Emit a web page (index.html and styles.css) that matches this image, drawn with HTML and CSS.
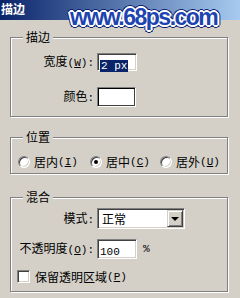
FILE: index.html
```html
<!DOCTYPE html>
<html lang="zh-CN">
<head>
    <meta charset="UTF-8">
    <meta name="viewport" content="width=device-width, initial-scale=1.0">
    <title>描边</title>
    <link rel="stylesheet" href="styles.css">
</head>
<body>
<div class="dialog">
    <div class="titlebar">描边</div>
    <div class="watermark">www.68ps.com</div>

    <div class="content">
        <div class="group g-stroke">
            <div class="legend">描边</div>
            <div class="form-grid">
                <label>宽度<span class="en">(<u>W</u>):</span></label>
                <span class="field"><span class="sel">2 px</span></span>
                <label>颜色<span class="en">:</span></label>
                <span class="swatch"></span>
            </div>
        </div>

        <div class="group g-pos">
            <div class="legend">位置</div>
            <div class="radios">
                <div class="opt"><span class="radio"></span>居内<span class="en">(<u>I</u>)</span></div>
                <div class="opt"><span class="radio on"></span>居中<span class="en">(<u>C</u>)</span></div>
                <div class="opt"><span class="radio"></span>居外<span class="en">(<u>U</u>)</span></div>
            </div>
        </div>

        <div class="group g-blend">
            <div class="legend">混合</div>
            <div class="form-grid">
                <label>模式<span class="en">:</span></label>
                <div class="select">
                    <span class="select-text">正常</span>
                    <span class="dd-btn"><span class="arrow"></span></span>
                </div>
                <label>不透明度<span class="en">(<u>O</u>):</span></label>
                <div class="with-unit">
                    <span class="field"><span class="val">100</span></span>
                    <span class="en unit">%</span>
                </div>
            </div>
            <div class="check-row">
                <span class="checkbox"></span>保留透明区域<span class="en">(<u>P</u>)</span>
            </div>
        </div>
    </div>
</div>
</body>
</html>
```

FILE: styles.css
```css
* { box-sizing: border-box; }
body { margin: 0; width: 240px; height: 298px; overflow: hidden; background: #d4d0c8; font-family: "Noto Sans CJK SC", sans-serif; font-size: 12px; line-height: 14px; color: #000; }
.en { font-family: "Liberation Mono", monospace; font-size: 11px; }
u { text-decoration: underline; text-underline-offset: 1px; }

.dialog { position: relative; height: 298px; }
.titlebar { height: 20px; line-height: 17px; padding-left: 1px; color: #fff; font-weight: bold; background: linear-gradient(to right, #0a246a, #a6caf0); }

/* site watermark stamped over the dialog */
.watermark {
    position: absolute; left: 70px; top: 6px;
    font-family: "Liberation Sans", Arial, sans-serif; font-weight: bold; font-size: 23px; line-height: 23px; letter-spacing: -1.5px;
    color: #1d44b0;
    text-shadow:
        1px 0 #fff, -1px 0 #fff, 0 1px #fff, 0 -1px #fff,
        1px 1px #fff, -1px -1px #fff, 1px -1px #fff, -1px 1px #fff,
        2px 0 #fff, -2px 0 #fff, 0 2px #fff, 0 -2px #fff,
        3px 0 #0d2370, -3px 0 #0d2370, 0 3px #0d2370, 0 -3px #0d2370,
        2px 2px #0d2370, -2px -2px #0d2370, 2px -2px #0d2370, -2px 2px #0d2370;
}

.content { padding: 17px 0 0 10px; }
.group { width: 218px; border: 1px solid #808080; box-shadow: inset 1px 1px 0 #fff, 1px 1px 0 #fff; }
.g-stroke { margin-bottom: 20px; padding-bottom: 9px; }
.g-pos { margin-bottom: 23px; padding-bottom: 4px; }
.g-blend { padding-bottom: 8px; }
.legend { width: max-content; height: 14px; margin: -8px 0 0 12px; padding: 0 3px; background: #d4d0c8; }

.form-grid { display: grid; grid-template-columns: 83px auto; column-gap: 3px; align-items: center; justify-items: start; }
.form-grid label { justify-self: end; }
.g-stroke .form-grid { margin-top: 9px; grid-template-rows: 18px 20px; row-gap: 16px; }
.g-blend .form-grid { margin-top: 4px; grid-template-rows: 21px 20px; row-gap: 10px; }

.field { display: block; width: 40px; height: 18px; padding: 3px 0 0 2px; background: #fff; border: 1px solid; border-color: #808080 #fff #fff #808080; box-shadow: inset 1px 1px 0 #404040, inset -1px -1px 0 #d4d0c8; }
.g-blend .field { height: 20px; }
.sel { display: inline-block; height: 12px; line-height: 12px; padding: 0 1px; background: #0a246a; color: #fff; font-family: "Liberation Mono", monospace; font-size: 11px; }
.val { display: inline-block; line-height: 13px; font-family: "Liberation Mono", monospace; font-size: 11px; }
.swatch { display: block; width: 39px; height: 20px; background: #fff; border: 1px solid; border-color: #808080 #fff #fff #808080; box-shadow: inset 1px 1px 0 #000, inset -1px -1px 0 #404040; }

.with-unit { display: flex; align-items: center; }
.unit { margin-left: 6px; }

.select { display: flex; align-items: center; width: 88px; height: 21px; padding: 1px; background: #fff; border: 1px solid; border-color: #808080 #fff #fff #808080; box-shadow: inset 1px 1px 0 #404040, inset -1px -1px 0 #d4d0c8; }
.select-text { flex: 1; padding-left: 3px; }
.dd-btn { display: grid; place-items: center; width: 16px; height: 17px; background: #d4d0c8; border: 1px solid; border-color: #d4d0c8 #404040 #404040 #d4d0c8; box-shadow: inset 1px 1px 0 #fff, inset -1px -1px 0 #808080; }
.arrow { width: 0; height: 0; border-left: 4px solid transparent; border-right: 4px solid transparent; border-top: 4px solid #000; }

.radios { display: grid; grid-template-columns: 72px 70px auto; margin-top: 11px; padding-left: 7px; height: 14px; }
.opt { display: flex; align-items: center; }
.radio { display: grid; place-items: center; width: 12px; height: 12px; margin-right: 4px; border-radius: 50%; background: #fff; border: 1px solid; border-color: #808080 #fff #fff #808080; box-shadow: inset 1px 1px 0 #404040, inset -1px -1px 0 #d4d0c8; }
.radio.on::after { content: ""; width: 4px; height: 4px; border-radius: 50%; background: #000; }

.check-row { display: flex; align-items: center; margin-top: 11px; padding-left: 6px; height: 13px; }
.checkbox { width: 13px; height: 13px; margin-right: 5px; background: #fff; border: 1px solid; border-color: #808080 #fff #fff #808080; box-shadow: inset 1px 1px 0 #404040, inset -1px -1px 0 #d4d0c8; }
```
